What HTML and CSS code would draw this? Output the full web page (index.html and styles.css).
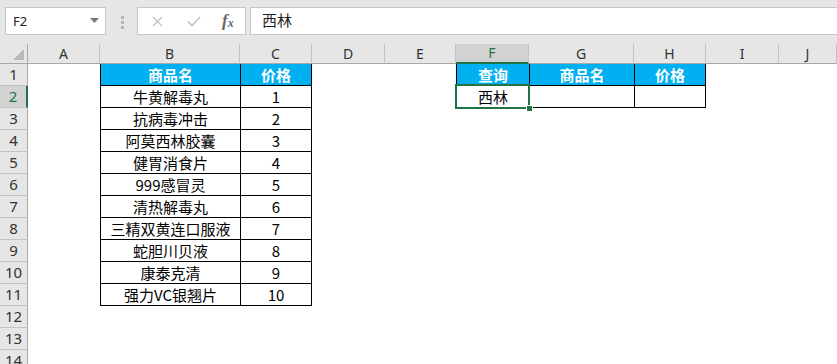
FILE: index.html
```html
<!DOCTYPE html>
<html lang="zh">
<head>
  <meta charset="UTF-8" />
  <title>Sheet</title>
  <link rel="stylesheet" href="styles.css">
</head>
<body>
  <div class="formula-bar">
    <div class="name-box">
      <span>F2</span>
      <svg class="drop" width="9" height="5" viewBox="0 0 9 5"><path d="M0 0h9L4.5 5z" fill="#7a7a7a"/></svg>
    </div>
    <div class="grip"><i></i><i></i><i></i></div>
    <div class="fx-buttons">
      <svg class="btn-x" width="11" height="11" viewBox="0 0 11 11"><path d="M1 1l9 9M10 1l-9 9" stroke="#c2c2c2" stroke-width="1.4" fill="none"/></svg>
      <svg class="btn-ok" width="14" height="11" viewBox="0 0 14 11"><path d="M1 5.5l4 4L13 1" stroke="#c2c2c2" stroke-width="1.6" fill="none"/></svg>
      <span class="fx">f<sub>x</sub></span>
    </div>
    <div class="formula-input">西林</div>
  </div>

  <div class="sheet">
    <div class="row col-head">
      <div class="corner"><svg width="11" height="11" viewBox="0 0 11 11"><path d="M11 0v11H0z" fill="#b8b8b8"/></svg></div>
      <div class="ch">A</div>
      <div class="ch">B</div>
      <div class="ch">C</div>
      <div class="ch">D</div>
      <div class="ch">E</div>
      <div class="ch on">F</div>
      <div class="ch">G</div>
      <div class="ch">H</div>
      <div class="ch">I</div>
      <div class="ch">J</div>
    </div>

    <div class="row">
      <div class="rh">1</div>
      <div class="cell cb box hd">商品名</div>
      <div class="cell cc box last hd">价格</div>
      <div class="cell cf box hd">查询</div>
      <div class="cell cg box hd">商品名</div>
      <div class="cell chh box last hd">价格</div>
    </div>
    <div class="row">
      <div class="rh on">2</div>
      <div class="cell cb box">牛黄解毒丸</div>
      <div class="cell cc box last">1</div>
      <div class="cell cf box active">西林<span class="sel"><span class="handle"></span></span></div>
      <div class="cell cg box"></div>
      <div class="cell chh box last"></div>
    </div>
    <div class="row">
      <div class="rh">3</div>
      <div class="cell cb box">抗病毒冲击</div>
      <div class="cell cc box last">2</div>
    </div>
    <div class="row">
      <div class="rh">4</div>
      <div class="cell cb box">阿莫西林胶囊</div>
      <div class="cell cc box last">3</div>
    </div>
    <div class="row">
      <div class="rh">5</div>
      <div class="cell cb box">健胃消食片</div>
      <div class="cell cc box last">4</div>
    </div>
    <div class="row">
      <div class="rh">6</div>
      <div class="cell cb box">999感冒灵</div>
      <div class="cell cc box last">5</div>
    </div>
    <div class="row">
      <div class="rh">7</div>
      <div class="cell cb box">清热解毒丸</div>
      <div class="cell cc box last">6</div>
    </div>
    <div class="row">
      <div class="rh">8</div>
      <div class="cell cb box">三精双黄连口服液</div>
      <div class="cell cc box last">7</div>
    </div>
    <div class="row">
      <div class="rh">9</div>
      <div class="cell cb box">蛇胆川贝液</div>
      <div class="cell cc box last">8</div>
    </div>
    <div class="row">
      <div class="rh">10</div>
      <div class="cell cb box">康泰克清</div>
      <div class="cell cc box last">9</div>
    </div>
    <div class="row">
      <div class="rh">11</div>
      <div class="cell cb box">强力VC银翘片</div>
      <div class="cell cc box last">10</div>
    </div>
    <div class="row"><div class="rh">12</div></div>
    <div class="row"><div class="rh">13</div></div>
    <div class="row"><div class="rh">14</div></div>
  </div>
</body>
</html>
```

FILE: styles.css
```css
body {
  margin: 0;
  width: 837px;
  height: 364px;
  overflow: hidden;
  background: #fff;
  font-family: "Noto Sans CJK SC", "Noto Sans", sans-serif;
  color: #000;
}

/* formula bar */
.formula-bar {
  height: 44px;
  background: #e6e6e6;
  display: flex;
  align-items: flex-start;
  padding: 7px 0 0 5px;
  box-sizing: border-box;
}
.name-box {
  width: 101px;
  height: 28px;
  box-sizing: border-box;
  background: #fff;
  border: 1px solid #c6c6c6;
  display: flex;
  align-items: center;
  justify-content: space-between;
  padding: 0 6px 0 7px;
  font-family: "Noto Sans", sans-serif;
  font-size: 13px;
  color: #222;
}
.name-box .drop {
  margin-top: -2px;
}
.grip {
  width: 3px;
  margin: 9px 13px 0 15px;
  display: flex;
  flex-direction: column;
  gap: 2px;
}
.grip i {
  width: 3px;
  height: 3px;
  background: #b4b4b4;
}
.fx-buttons {
  width: 109px;
  height: 28px;
  box-sizing: border-box;
  background: #fff;
  border: 1px solid #c6c6c6;
  display: flex;
  align-items: center;
  padding-left: 14px;
}
.btn-ok {
  margin-left: 24px;
}
.fx {
  margin-left: 21px;
  font-family: "Liberation Serif", serif;
  font-style: italic;
  font-weight: bold;
  font-size: 17px;
  color: #666;
}
.fx sub {
  font-size: 12px;
  vertical-align: -1px;
}
.formula-input {
  flex: 1;
  height: 28px;
  box-sizing: border-box;
  margin: 0 -2px 0 4px;
  background: #fff;
  border: 1px solid #c6c6c6;
  padding-left: 11px;
  font-size: 15px;
  line-height: 24px;
  color: #222;
}

/* sheet */
.row {
  display: grid;
  grid-template-columns: 28px 72px 140px 72px 73px 71px 73px 105px 72px 73px 1fr;
  height: 22px;
}
.col-head {
  height: 20px;
  background: #e6e6e6;
}
.corner {
  border-right: 1px solid #a8a8a8;
  border-bottom: 1px solid #a8a8a8;
  display: flex;
  align-items: flex-end;
  justify-content: flex-end;
  padding: 0 3px 3px 0;
}
.ch {
  border-right: 1px solid #c4c4c4;
  border-bottom: 1px solid #a8a8a8;
  text-align: center;
  font-family: "Noto Sans", sans-serif;
  font-size: 14px;
  line-height: 19px;
  color: #333;
}
.ch.on {
  background: #d2d2d2;
  border-bottom: 2px solid #217346;
  line-height: 18px;
  color: #217346;
}
.rh {
  grid-column: 1;
  background: #e6e6e6;
  border-right: 1px solid #a8a8a8;
  border-bottom: 1px solid #c4c4c4;
  text-align: center;
  font-family: "Noto Sans", sans-serif;
  font-size: 15px;
  line-height: 21px;
  color: #333;
}
.rh.on {
  background: #d2d2d2;
  border-right: 2px solid #217346;
  color: #217346;
}

.cell {
  text-align: center;
  font-size: 15px;
  line-height: 21px;
  white-space: nowrap;
}
.cb { grid-column: 3; }
.cc { grid-column: 4; }
.cf { grid-column: 7; }
.cg { grid-column: 8; }
.chh { grid-column: 9; }

.box {
  border-left: 1px solid #000;
  border-bottom: 1px solid #000;
}
.box.last {
  border-right: 1px solid #000;
}
.hd {
  background: #00b0f0;
  color: #fff;
  font-weight: bold;
}

.active {
  position: relative;
}
.sel {
  position: absolute;
  left: -2px;
  top: -2px;
  right: -1px;
  bottom: -2px;
  border: 2px solid #217346;
}
.handle {
  position: absolute;
  right: -5px;
  bottom: -5px;
  width: 5px;
  height: 5px;
  background: #217346;
  border: 1px solid #fff;
}
```
